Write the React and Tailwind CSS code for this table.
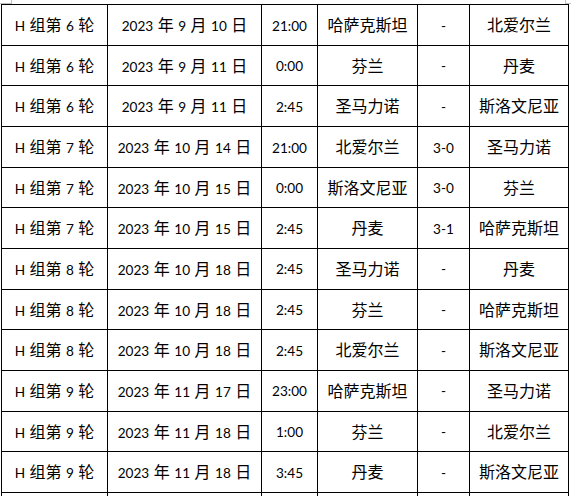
import React from "react";

const rows = [
  ["H 组第 6 轮", "2023 年 9 月 10 日", "21:00", "哈萨克斯坦", "-", "北爱尔兰"],
  ["H 组第 6 轮", "2023 年 9 月 11 日", "0:00", "芬兰", "-", "丹麦"],
  ["H 组第 6 轮", "2023 年 9 月 11 日", "2:45", "圣马力诺", "-", "斯洛文尼亚"],
  ["H 组第 7 轮", "2023 年 10 月 14 日", "21:00", "北爱尔兰", "3-0", "圣马力诺"],
  ["H 组第 7 轮", "2023 年 10 月 15 日", "0:00", "斯洛文尼亚", "3-0", "芬兰"],
  ["H 组第 7 轮", "2023 年 10 月 15 日", "2:45", "丹麦", "3-1", "哈萨克斯坦"],
  ["H 组第 8 轮", "2023 年 10 月 18 日", "2:45", "圣马力诺", "-", "丹麦"],
  ["H 组第 8 轮", "2023 年 10 月 18 日", "2:45", "芬兰", "-", "哈萨克斯坦"],
  ["H 组第 8 轮", "2023 年 10 月 18 日", "2:45", "北爱尔兰", "-", "斯洛文尼亚"],
  ["H 组第 9 轮", "2023 年 11 月 17 日", "23:00", "哈萨克斯坦", "-", "圣马力诺"],
  ["H 组第 9 轮", "2023 年 11 月 18 日", "1:00", "芬兰", "-", "北爱尔兰"],
  ["H 组第 9 轮", "2023 年 11 月 18 日", "3:45", "丹麦", "-", "斯洛文尼亚"],
  ["", "", "", "", "", ""],
];

const widths = ["w-[106px]", "w-[154px]", "w-[56px]", "w-[100px]", "w-[52px]", "w-[99px]"];

// latin runs in Lato (calibri-ish), cjk runs a bit bigger
function Txt({ s }) {
  return s.split(/([\u4e00-\u9fff]+)/).map((p, i) =>
    /[\u4e00-\u9fff]/.test(p) ? (
      <span key={i} className="text-[16px] font-['Noto_Sans_CJK_SC',sans-serif]">
        {p}
      </span>
    ) : (
      <span key={i} className="text-[13.6px] font-['Lato',sans-serif] [word-spacing:1px]">
        {p}
      </span>
    )
  );
}

export default function App() {
  return (
    <div className="relative w-[571px] h-[496px] overflow-hidden bg-white text-black pl-[1px] pt-[4px]">
      {/* page corner marks */}
      <div className="absolute left-0 top-[3px] w-[11px] h-px bg-[#c0c0c0]" />
      <div className="absolute left-[11px] top-0 w-px h-[4px] bg-[#c0c0c0]" />
      <div className="absolute left-[565px] top-[3px] w-[6px] h-px bg-[#c0c0c0]" />
      <div className="absolute left-[565px] top-0 w-px h-[4px] bg-[#c0c0c0]" />

      <table className="border-collapse table-fixed w-[568px]">
        <colgroup>
          {widths.map((w, i) => (
            <col key={i} className={w} />
          ))}
        </colgroup>
        <tbody>
          {rows.map((r, i) => (
            <tr key={i} className="h-[40.67px]">
              {r.map((c, j) => (
                <td
                  key={j}
                  className="border border-black p-0 text-center align-middle whitespace-nowrap leading-none"
                >
                  <Txt s={c} />
                </td>
              ))}
            </tr>
          ))}
        </tbody>
      </table>
    </div>
  );
}
